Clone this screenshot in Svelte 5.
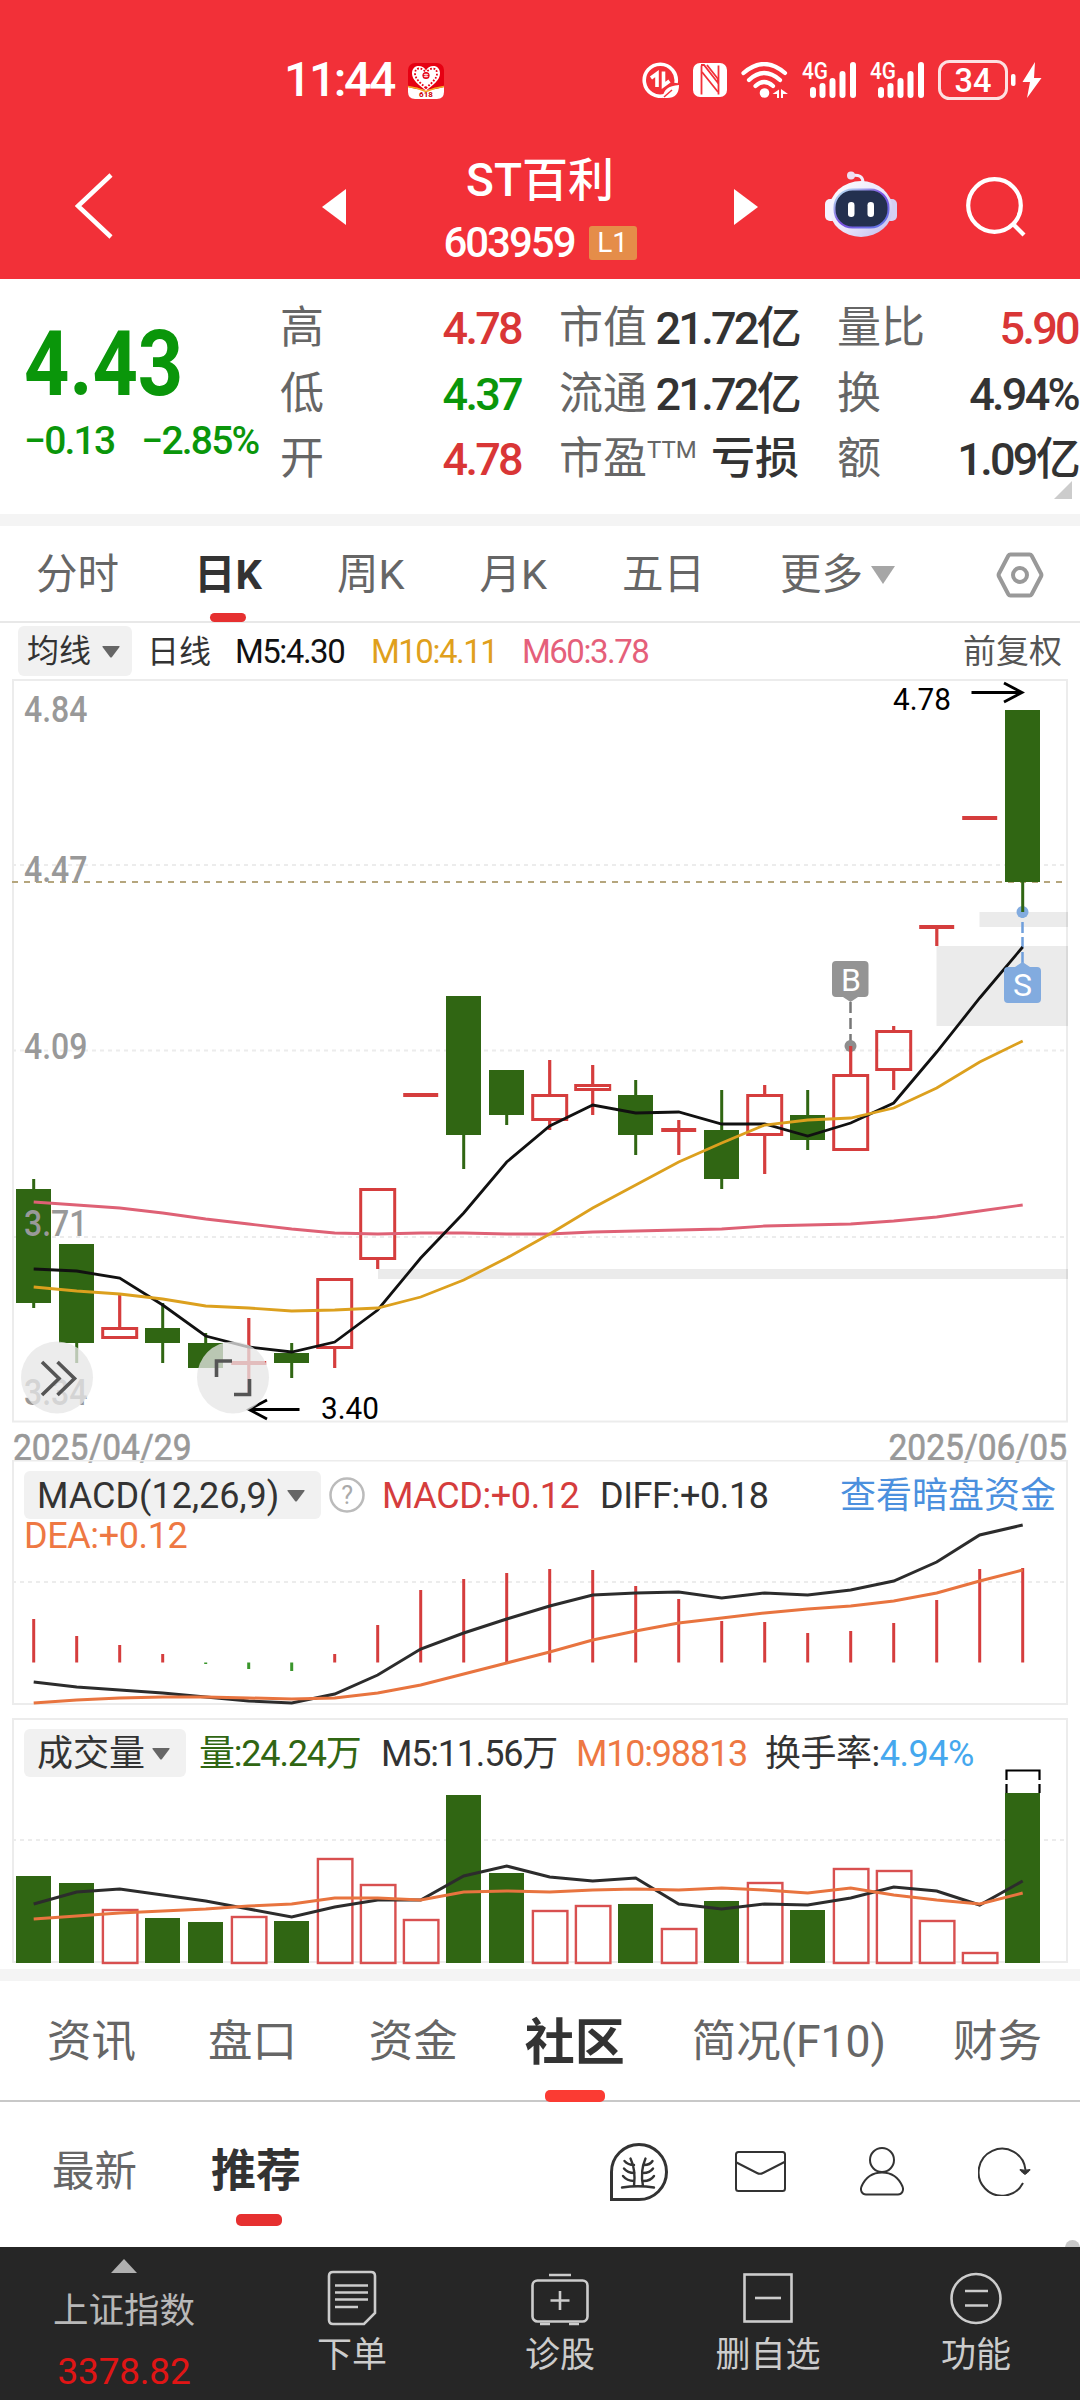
<script>
  // [type, high, bodyTop, bodyBottom, low], one entry per trading day
  const candles = [
    ['down', 1179, 1189, 1303, 1308],
    ['down', 1244, 1244, 1343, 1363],
    ['up', 1295, 1327, 1339, 1339],
    ['down', 1303, 1328, 1343, 1363],
    ['down', 1333, 1343, 1368, 1368],
    ['flat', 1318, 1361, 1365, 1393],
    ['down', 1343, 1353, 1363, 1378],
    ['up', 1278, 1278, 1349, 1368],
    ['up', 1188, 1188, 1260, 1269],
    ['flat', 1093, 1093, 1097, 1097],
    ['down', 996, 996, 1135, 1169],
    ['down', 1070, 1070, 1115, 1125],
    ['up', 1060, 1094, 1121, 1130],
    ['up', 1065, 1084, 1091, 1115],
    ['down', 1080, 1095, 1135, 1155],
    ['flat', 1120, 1128, 1132, 1155],
    ['down', 1090, 1130, 1179, 1189],
    ['up', 1085, 1094, 1136, 1174],
    ['down', 1090, 1115, 1140, 1150],
    ['up', 1046, 1074, 1151, 1151],
    ['up', 1026, 1030, 1071, 1090],
    ['flat', 925, 925, 929, 946],
    ['flat', 816, 816, 820, 820],
    ['down', 710, 710, 882, 912]
  ];

  const ma5 = [1269, 1271, 1278, 1305, 1336, 1347, 1352, 1342, 1310, 1258, 1213, 1162, 1126, 1105, 1113, 1112, 1124, 1124, 1136, 1123, 1103, 1052, 998, 947];
  const ma10 = [1287, 1291, 1294, 1299, 1306, 1308, 1311, 1310, 1308, 1297, 1280, 1258, 1234, 1208, 1185, 1162, 1143, 1125, 1120, 1118, 1108, 1088, 1062, 1041];
  const ma60 = [1202, 1205, 1208, 1213, 1219, 1224, 1229, 1233, 1234, 1233, 1233, 1234, 1234, 1232, 1231, 1230, 1229, 1226, 1225, 1224, 1221, 1217, 1211, 1205];

  const macd = [1619, 1636, 1645, 1654, 1664, 1669, 1671, 1654, 1625, 1590, 1579, 1573, 1569, 1570, 1586, 1599, 1621, 1622, 1633, 1631, 1623, 1600, 1569, 1568];
  const diff = [1682, 1687, 1690, 1693, 1697, 1701, 1703, 1694, 1675, 1649, 1633, 1619, 1606, 1595, 1593, 1592, 1598, 1593, 1595, 1590, 1581, 1562, 1535, 1525];
  const dea = [1703, 1700, 1698, 1697, 1697, 1698, 1699, 1698, 1693, 1685, 1674, 1663, 1652, 1640, 1631, 1623, 1618, 1613, 1609, 1606, 1601, 1593, 1581, 1570];

  const volume = [1876, 1883, 1909, 1918, 1922, 1916, 1921, 1858, 1884, 1919, 1795, 1873, 1910, 1905, 1904, 1928, 1901, 1882, 1910, 1868, 1870, 1920, 1952, 1793];
  const volumeDown = [0, 1, 3, 4, 6, 10, 11, 14, 16, 18, 23];
  const vol5 = [1904, 1892, 1889, 1895, 1901, 1909, 1917, 1907, 1900, 1900, 1876, 1866, 1877, 1881, 1878, 1904, 1909, 1904, 1905, 1898, 1887, 1891, 1905, 1881];
  const vol10 = [1919, 1916, 1913, 1911, 1909, 1906, 1904, 1898, 1898, 1900, 1892, 1891, 1892, 1890, 1889, 1890, 1888, 1890, 1893, 1888, 1895, 1900, 1904, 1893];

  const axis = [
    { text: '4.84', y: 722 },
    { text: '4.47', y: 882 },
    { text: '4.09', y: 1059 },
    { text: '3.71', y: 1236 },
    { text: '3.34', y: 1405 }
  ];

  let period = $state('日K');
  let section = $state('社区');
  let feed = $state('推荐');

  const periods = ['分时', '日K', '周K', '月K', '五日'];
  const sections = ['资讯', '盘口', '资金', '社区', '简况(F10)', '财务'];
  const feeds = ['最新', '推荐'];

  const x = (i) => 33.7 + i * 43;
  const line = (ys) => ys.map((y, i) => `${x(i)},${y}`).join(' ');
</script>

{#snippet caret()}
  <svg class="caret" width="18" height="12" viewBox="0 0 18 12"><path d="M1 0h16q1 0 .5 1L10 11q-1 1-2 0L.5 1Q0 0 1 0Z" fill="currentColor" /></svg>
{/snippet}

{#snippet signal()}
  <svg class="signal" width="54" height="48" viewBox="0 -6 54 48">
    <text x="0" y="17" font-size="23" font-weight="500" fill="#fff" textLength="26" lengthAdjust="spacingAndGlyphs">4G</text>
    <g stroke="#fff" stroke-width="6" stroke-linecap="round">
      <path d="M11 28v5M20.500 24v9M30.500 19v14M40.500 12v21M51 3v30" />
    </g>
  </svg>
{/snippet}

<div class="screen">
  <header>
    <div class="status">
      <span class="clock">11:44</span>
      <svg class="app" width="36" height="36" viewBox="0 0 36 36">
        <rect width="36" height="36" rx="7" fill="#e60012" />
        <path d="M0 24q18 6 36 0v5q0 7-7 7H7q-7 0-7-7Z" fill="#fff" />
        <path d="M0 23.500q9 1 18 5q9-4 18-5" fill="none" stroke="#f5a623" stroke-width="1.500" />
        <path d="M18 27.500C11 22 4 17 4 10.500c0-5 3-7.500 6.500-7.500C14 3 17 5 18 7.500 19 5 22 3 25.500 3 29 3 32 5.500 32 10.500c0 6.500-7 11.500-14 17Z" fill="#fff" />
        <path d="M18 25C11 19 7 15 7 10.500 7 7 9 5.500 11 5.500c3 0 6 2 7 5 1-3 4-5 7-5 2 0 4 1.500 4 5C29 15 25 19 18 25Z" fill="none" stroke="#e60012" stroke-width="1.800" stroke-dasharray="1.800 1.600" />
        <circle cx="18" cy="12.500" r="3.600" fill="#e60012" />
        <path d="M15.800 11.500h4.400M15.800 13.500h4.400M17.200 10.500v4M18.800 10.500v4" stroke="#fff" stroke-width=".7" />
        <text x="18" y="34.300" text-anchor="middle" font-size="8" font-weight="700" fill="#c00">618</text>
      </svg>
      <div class="system">
        <svg width="37" height="36" viewBox="0 0 37 36">
          <path d="M23 33.500A16 16 0 1 1 34 21" fill="none" stroke="#fff" stroke-width="3.600" />
          <path d="M15 25V11.500L9 16M21.500 9.500V23.500l6-4.500" fill="none" stroke="#fff" stroke-width="3.600" />
          <path d="M21 36q0-12 16-13 0 13-12 13" fill="#fff" />
          <path d="M22 35l8-7" stroke="#f23038" stroke-width="1.500" />
        </svg>
        <svg class="nfc" width="34" height="34" viewBox="0 0 34 34">
          <rect width="34" height="34" rx="7" fill="#fff" />
          <path d="M8.500 2.500v29M25.500 2.500v29" stroke="#f23038" stroke-width="1.800" />
          <path d="M8 2l3 0 14 18v-4L14 2M9 9l16 20" fill="none" stroke="#f23038" stroke-width="1.800" />
        </svg>
        <svg class="wifi" width="47" height="36" viewBox="0 0 47 36">
          <g fill="none" stroke="#fff" stroke-width="4.200" stroke-linecap="round">
            <path d="M2.500 11Q23 -7 44 11M8 18Q23 4 39 18M14.500 24Q23 16 32 24" />
          </g>
          <circle cx="23.500" cy="31" r="4.800" fill="#fff" />
          <path d="M38 27.500V36h-2v-4h-4.500ZM40 36v-9l7 5h-5v4Z" fill="#fff" />
        </svg>
        {@render signal()}
        {@render signal()}
        <svg class="battery" width="106" height="40" viewBox="0 0 106 40">
          <rect x="1.500" y="1.500" width="67" height="37" rx="10" fill="none" stroke="#fff" stroke-opacity=".85" stroke-width="3" />
          <text x="16.500" y="32" font-size="34" font-weight="500" fill="#fff" textLength="37" lengthAdjust="spacingAndGlyphs">34</text>
          <rect x="73" y="14" width="4.500" height="12" rx="2" fill="#fff" />
          <path d="M97 2 84.500 22H92l-3 16 14.500-20H96Z" fill="#fff" />
        </svg>
      </div>
    </div>
    <div class="titlebar">
      <svg class="back" width="38" height="66" viewBox="0 0 38 66"><path d="M36 2 3 33l33 31" fill="none" stroke="#fff" stroke-width="4.500" /></svg>
      <svg class="prev" width="24" height="36" viewBox="0 0 24 36"><path d="M24 0v36L0 18Z" fill="#fff" /></svg>
      <div class="stock">
        <div class="name">ST百利</div>
        <div class="code"><span>603959</span><b>L1</b></div>
      </div>
      <svg class="next" width="24" height="36" viewBox="0 0 24 36"><path d="M0 0v36l24-18Z" fill="#fff" /></svg>
      <svg class="robot" width="72" height="66" viewBox="0 0 72 66">
        <defs>
          <linearGradient id="shell" x1="0" y1="0" x2="1" y2="1">
            <stop offset="0" stop-color="#ffffff" />
            <stop offset=".55" stop-color="#e9e6fb" />
            <stop offset="1" stop-color="#bdb9ec" />
          </linearGradient>
          <linearGradient id="rim" x1="0" y1="0" x2="1" y2="1">
            <stop offset="0" stop-color="#bff3f5" />
            <stop offset=".5" stop-color="#7b4fe0" />
            <stop offset="1" stop-color="#5f7fe8" />
          </linearGradient>
        </defs>
        <path d="M26 4.500q12-2 12 7" fill="none" stroke="#f4ecfb" stroke-width="3" />
        <circle cx="26" cy="4.500" r="4" fill="#eedff2" />
        <rect x="0" y="28" width="12" height="22" rx="5" fill="#f5f2ff" />
        <rect x="60" y="28" width="12" height="22" rx="5" fill="#d5d0f4" />
        <ellipse cx="36" cy="38" rx="31.500" ry="28" fill="url(#shell)" />
        <rect x="9.500" y="18.500" width="54" height="38" rx="18" fill="#23304f" stroke="url(#rim)" stroke-width="2" />
        <rect x="23" y="31" width="6.500" height="15" rx="3.200" fill="#fff" />
        <rect x="42.500" y="31" width="6.500" height="15" rx="3.200" fill="#fff" />
      </svg>
      <svg class="search" width="60" height="60" viewBox="0 0 60 60">
        <g fill="none" stroke="#fff" stroke-width="4.200"><circle cx="28.500" cy="28.500" r="26.300" /><path d="M47 47l11 11" /></g>
      </svg>
    </div>
  </header>

  <section class="quote">
    <div class="last">
      <div class="price">4.43</div>
      <div class="change"><span>−0.13</span><span>−2.85%</span></div>
    </div>
    <dl class="pairs first">
      <div><dt>高</dt><dd class="red">4.78</dd></div>
      <div><dt>低</dt><dd class="green">4.37</dd></div>
      <div><dt>开</dt><dd class="red">4.78</dd></div>
    </dl>
    <dl class="pairs second">
      <div><dt>市值</dt><dd>21.72亿</dd></div>
      <div><dt>流通</dt><dd>21.72亿</dd></div>
      <div><dt>市盈<sup>TTM</sup></dt><dd class="cjk">亏损</dd></div>
    </dl>
    <dl class="pairs third">
      <div><dt>量比</dt><dd class="red">5.90</dd></div>
      <div><dt>换</dt><dd>4.94%</dd></div>
      <div><dt>额</dt><dd>1.09亿</dd></div>
    </dl>
    <svg class="corner" width="18" height="18" viewBox="0 0 18 18"><path d="M18 0v18H0Z" fill="#ccc" /></svg>
  </section>

  <nav class="periods">
    {#each periods as p}
      <button class:active={p === period} onclick={() => (period = p)}>{p}</button>
    {/each}
    <button class="more">更多<svg width="24" height="18" viewBox="0 0 24 18"><path d="M0 0h24L12 18Z" fill="#a6a6a6" /></svg></button>
    <svg class="gear" width="48" height="46" viewBox="0 0 48 46">
      <g fill="none" stroke="#999" stroke-width="4"><path d="M14.500 2.500h19q1.500 0 2.200 1.200L45 21.500q.8 1.500 0 3l-9.300 17.800q-.7 1.200-2.200 1.200h-19q-1.500 0-2.200-1.200L3 24.500q-.8-1.500 0-3l9.300-17.800q.7-1.200 2.200-1.200Z" /><circle cx="24" cy="23" r="7" /></g>
    </svg>
  </nav>

  <div class="averages">
    <button class="pick">均线{@render caret()}</button>
    <span class="daily">日线</span>
    <span class="m5">M5:4.30</span>
    <span class="m10">M10:4.11</span>
    <span class="m60">M60:3.78</span>
    <span class="adjust">前复权</span>
  </div>

  <svg class="kline" width="1080" height="793" viewBox="0 679 1080 793">
    <g fill="none" stroke="#ececec" stroke-width="2">
      <rect x="13" y="680" width="1054" height="741.500" />
      <path d="M12 865H1067M12 1050.500H1067M12 1237H1067" stroke-dasharray="4 4" />
    </g>
    <g fill="#000" fill-opacity=".08">
      <rect x="979.500" y="912" width="88.500" height="15" />
      <rect x="936.500" y="946" width="131.500" height="80" />
      <rect x="378" y="1269" width="690" height="10" />
    </g>
    <path d="M12 882H1063" stroke="#b5a67d" stroke-width="2" stroke-dasharray="6 6" />

    <path d="M850.500 1002v42" stroke="#777" stroke-width="2.500" stroke-dasharray="11 5" />
    <circle cx="850.500" cy="1046" r="6" fill="#8d8d8d" />
    <path d="M1022.500 912v52" stroke="#6f9fdc" stroke-width="2.500" stroke-dasharray="11 4" stroke-dashoffset="5" />
    <circle cx="1022.500" cy="912" r="6" fill="#82abdf" />

    {#each candles as [type, high, top, bottom, low], i}
      {#if type === 'down'}
        <rect x={x(i) - 1.5} y={high} width="3" height={low - high} fill="#306613" />
        <rect x={x(i) - 17.7} y={top} width="35" height={bottom - top} fill="#306613" />
      {:else if type === 'up'}
        <path d="M{x(i)} {high}V{top}M{x(i)} {bottom}V{low}" stroke="#d53d3d" stroke-width="3.2" />
        <rect x={x(i) - 17} y={top + 1.5} width="34" height={bottom - top - 3} fill="none" stroke="#d53d3d" stroke-width="3" />
      {:else}
        <rect x={x(i) - 1.5} y={high} width="3.2" height={low - high} fill="#d53d3d" />
        <rect x={x(i) - 17.5} y={top} width="35" height={bottom - top} fill="#d53d3d" />
      {/if}
    {/each}

    <g font-size="36" fill="#999">
      {#each axis as label}
        <text x="24" y={label.y} font-weight="500" textLength="63.500" lengthAdjust="spacingAndGlyphs">{label.text}</text>
      {/each}
      <text x="13" y="1459.500" textLength="178.500" lengthAdjust="spacingAndGlyphs" stroke="#999" stroke-width=".6">2025/04/29</text>
      <text x="888.500" y="1459.500" textLength="178.500" lengthAdjust="spacingAndGlyphs" stroke="#999" stroke-width=".6">2025/06/05</text>
    </g>

    <g fill="none" stroke-width="2.800">
      <polyline points={line(ma60)} stroke="#de6175" />
      <polyline points={line(ma5)} stroke="#111" />
      <polyline points={line(ma10)} stroke="#dca01e" />
    </g>

    <path d="M836 961h28.500q4 0 4 4v28q0 4-4 4H858l-7.500 5-7.500-5h-7q-4 0-4-4v-28q0-4 4-4Z" fill="#949494" />
    <text x="851" y="990.500" text-anchor="middle" font-size="32" fill="#fff">B</text>
    <path d="M1008 967h7l7.500-5 7.500 5h7q4 0 4 4v28q0 4-4 4h-29q-4 0-4-4v-28q0-4 4-4Z" fill="#82abdf" />
    <text x="1022.500" y="996" text-anchor="middle" font-size="32" fill="#fff">S</text>

    <g font-size="31" fill="#000">
      <text x="893" y="710" textLength="58" lengthAdjust="spacingAndGlyphs">4.78</text>
      <text x="321" y="1419" textLength="58" lengthAdjust="spacingAndGlyphs">3.40</text>
    </g>
    <path d="M971.500 692.500H1022M1004 683l18 9.500-18 9.500M299.500 1409.500H249M267 1400l-18 9.500 18 9.500" fill="none" stroke="#000" stroke-width="2.800" />

    <g fill="#e6e6e6" fill-opacity=".76">
      <circle cx="57" cy="1377.500" r="36" />
      <circle cx="233" cy="1377.500" r="36" />
    </g>
    <g fill="none" stroke="#555" stroke-width="3.600">
      <path d="M42 1362l17 16.500L42 1395M57.500 1362l17 16.500-17 16.500" />
      <path d="M216.500 1377v-16H232M249.500 1379v15.500H234" />
    </g>
  </svg>

  <section class="panel macd">
    <svg width="1080" height="258" viewBox="0 1460 1080 258">
      <g fill="none" stroke="#ececec" stroke-width="2">
        <rect x="13" y="1460.500" width="1054" height="243.500" />
        <path d="M12 1582H1067" stroke-dasharray="4 4" />
      </g>
      {#each macd as y, i}
        <path d="M{x(i)} {y}V1662.500" stroke={y > 1662 ? '#3a962c' : '#d53d3d'} stroke-width="3" />
      {/each}
      <polyline points={line(diff)} fill="none" stroke="#2c2c2c" stroke-width="3" />
      <polyline points={line(dea)} fill="none" stroke="#e8743f" stroke-width="3" />
    </svg>
    <div class="legend">
      <div class="row">
        <button class="pick">MACD(12,26,9){@render caret()}</button>
        <svg class="help" width="36" height="36" viewBox="0 0 36 36">
          <circle cx="18" cy="18" r="16.500" fill="none" stroke="#bbb" stroke-width="2.500" />
          <text x="18" y="26.500" text-anchor="middle" font-size="25" fill="#aaa">?</text>
        </svg>
        <span class="bar">MACD:+0.12</span>
        <span class="diff">DIFF:+0.18</span>
        <a class="dark" href="#funds">查看暗盘资金</a>
      </div>
      <div class="dea">DEA:+0.12</div>
    </div>
  </section>

  <section class="panel volume">
    <svg width="1080" height="251" viewBox="0 1718 1080 251">
      <g fill="none" stroke="#ececec" stroke-width="2">
        <rect x="13" y="1719" width="1054" height="243" />
        <path d="M12 1840H1067" stroke-dasharray="4 4" />
      </g>
      {#each volume as y, i}
        {#if volumeDown.includes(i)}
          <rect x={x(i) - 17.7} {y} width="35" height={1963 - y} fill="#306613" />
        {:else}
          <rect x={x(i) - 16.8} y={y + 1} width="34.5" height={1962 - y} fill="none" stroke="#d85050" stroke-width="2.400" />
        {/if}
      {/each}
      <path d="M1006.500 1780v-9.500h33v9.500M1006.500 1784v9M1039.500 1784v9" fill="none" stroke="#000" stroke-width="2.200" />
      <polyline points={line(vol5)} fill="none" stroke="#2c2c2c" stroke-width="3" />
      <polyline points={line(vol10)} fill="none" stroke="#e8743f" stroke-width="3" />
    </svg>
    <div class="legend">
      <div class="row">
        <button class="pick">成交量{@render caret()}</button>
        <span class="total">量:24.24万</span>
        <span class="v5">M5:11.56万</span>
        <span class="v10">M10:98813</span>
        <span class="rate">换手率:<em>4.94%</em></span>
      </div>
    </div>
  </section>

  <nav class="sections">
    {#each sections as s}
      <button class:active={s === section} onclick={() => (section = s)}>{s}</button>
    {/each}
  </nav>

  <div class="feeds">
    {#each feeds as f}
      <button class:active={f === feed} onclick={() => (feed = f)}>{f}</button>
    {/each}
    <div class="tools">
      <svg width="58" height="58" viewBox="0 0 58 58">
        <g fill="none" stroke="#333" stroke-linecap="round">
          <path d="M1.500 56.500V29A27.500 27.500 0 1 1 29 56.500Z" stroke-width="3" stroke-linecap="butt" />
          <path d="M12 44.500q16-2.500 32 0M24 43q2-16-3.500-27.500M33 43q-3-15 2.500-27.500M24 22q-6 0-9.500-4M24.500 30q-7 0-10.500-4.500M24 38q-7 0-11-5M34 22q6 0 8.500-4M33 30q7 0 10-4.500M33.500 38q7 0 10.500-5" stroke-width="2.400" />
        </g>
      </svg>
      <svg class="mail" width="51" height="41" viewBox="0 0 51 41">
        <g fill="none" stroke="#333" stroke-width="2"><rect x="1" y="1" width="49" height="39" rx="2.500" /><path d="M1.500 11.500 22 22q3 1.500 6 0l21.500-11" /></g>
      </svg>
      <svg width="44" height="49" viewBox="0 0 44 49">
        <g fill="none" stroke="#333" stroke-width="2"><circle cx="22" cy="13" r="12" /><path d="M22 25.500c10 0 17 6 20.500 14 1.500 4-.5 8-4.500 8H6c-4 0-6-4-4.500-8C5 31.500 12 25.500 22 25.500Z" /></g>
      </svg>
      <svg width="53" height="49" viewBox="0 0 53 49">
        <path d="M45 36A23.500 23.500 0 1 1 47.500 23" fill="none" stroke="#333" stroke-width="2" />
        <path d="M42 22.500q5 1.500 10 0 .5 1-5 5-5.500-4-5-5Z" fill="#333" stroke="#333" />
      </svg>
    </div>
    <i class="knob"></i>
  </div>

  <footer>
    <div class="index">
      <svg width="26" height="14" viewBox="0 0 26 14"><path d="M13 0l13 14H0Z" fill="#b0b0b0" /></svg>
      <span>上证指数</span>
      <strong>3378.82</strong>
    </div>
    <button>
      <svg width="56" height="56" viewBox="0 0 56 56">
        <g fill="none" stroke="#ccc" stroke-width="2.600"><path d="M9 2h38q4 0 4 4v37L40 54H9q-4 0-4-4V6q0-4 4-4ZM11 15.500h33M11 22.500h33M11 29.500h33M11 37h23" /></g>
      </svg>
      下单
    </button>
    <button>
      <svg width="58" height="56" viewBox="0 0 58 56">
        <g fill="none" stroke="#ccc" stroke-width="2.600"><rect x="1.500" y="10.500" width="55" height="41" rx="5" /><path d="M18 5h22M29 21v19M19.500 30.500h19M9 54h10M38 54h10" /></g>
      </svg>
      诊股
    </button>
    <button>
      <svg width="56" height="56" viewBox="0 0 56 56">
        <g fill="none" stroke="#ccc" stroke-width="2.600"><rect x="4.500" y="4.500" width="47" height="47" /><path d="M15 28h26" /></g>
      </svg>
      删自选
    </button>
    <button>
      <svg width="56" height="56" viewBox="0 0 56 56">
        <g fill="none" stroke="#ccc" stroke-width="2.600"><circle cx="28" cy="28.500" r="24.500" /><path d="M17 21h23M17 35.500h23" /></g>
      </svg>
      功能
    </button>
  </footer>
</div>

<style>
  :global(body) {
    margin: 0;
    background: #fff;
  }

  .screen {
    width: 1080px;
    height: 2400px;
    display: flex;
    flex-direction: column;
    overflow: hidden;
    background: #fff;
    color: #333;
    font-family: Roboto, 'Noto Sans CJK SC', sans-serif;
    line-height: 1.2;
  }

  svg {
    display: block;
    flex: none;
  }

  button {
    border: 0;
    padding: 0;
    background: none;
    color: inherit;
    font: inherit;
    white-space: nowrap;
  }

  header {
    flex: none;
    height: 279px;
    background: #f23038;
    color: #fff;
  }

  .status {
    display: flex;
    align-items: center;
    height: 160px;
    padding: 0 36px 0 284px;
    box-sizing: border-box;
  }

  .clock {
    width: 124px;
    font-size: 48px;
    font-weight: 500;
    letter-spacing: -2.4px;
  }

  .app {
    margin-top: 2px;
  }

  .system {
    display: flex;
    align-items: center;
    margin-left: auto;
  }

  .nfc,
  .wifi,
  .signal,
  .battery {
    margin-left: 14px;
  }

  .titlebar {
    display: flex;
    align-items: center;
    height: 92px;
    padding-left: 75px;
  }

  .prev {
    margin: 1px 0 0 209px;
  }

  .stock {
    width: 388px;
    padding-top: 13px;
    text-align: center;
  }

  .name {
    font-size: 46px;
    line-height: 60px;
    font-weight: 500;
  }

  .code {
    display: flex;
    justify-content: center;
    align-items: center;
    gap: 14px;
    font-size: 42px;
    line-height: 66px;
    font-weight: 500;
    letter-spacing: -2px;
  }

  .code b {
    width: 48px;
    height: 34px;
    border-radius: 3px;
    background: #e58d49;
    font-size: 28px;
    line-height: 34px;
    font-weight: 400;
    letter-spacing: 0;
  }

  .next {
    margin-top: 1px;
  }

  .robot {
    margin: -4px 0 0 67px;
  }

  .search {
    margin: 1px 0 0 69px;
  }

  .quote {
    position: relative;
    flex: none;
    display: flex;
    height: 235px;
    border-bottom: 12px solid #f4f4f4;
  }

  .last {
    width: 280px;
    padding-left: 24px;
    box-sizing: border-box;
    color: #0a960a;
  }

  .price {
    margin-top: 41px;
    font-size: 90px;
    line-height: 90px;
    font-weight: 700;
    transform: scaleX(0.88);
    transform-origin: 0 50%;
  }

  .change {
    display: flex;
    gap: 27px;
    margin-top: 8px;
    font-size: 39px;
    line-height: 46px;
    font-weight: 500;
    letter-spacing: -1.8px;
    white-space: nowrap;
  }

  .pairs {
    margin: 17px 0 0;
  }

  .pairs div {
    display: flex;
    justify-content: space-between;
    align-items: center;
    height: 65.5px;
    line-height: 65px;
  }

  .first {
    width: 241px;
  }

  .second {
    width: 240px;
    margin-left: 38px;
  }

  .third {
    width: 242px;
    margin-left: 38px;
  }

  dt {
    font-size: 44px;
    color: #666;
    white-space: nowrap;
  }

  sup {
    font-size: 24px;
    line-height: 0;
    vertical-align: 16px;
  }

  dd {
    margin: 0;
    font-size: 45px;
    font-weight: 500;
    letter-spacing: -2.7px;
    white-space: nowrap;
  }

  .third dd {
    margin-right: 1px;
  }

  dd.cjk {
    font-size: 44px;
    letter-spacing: 0;
  }

  .red {
    color: #d93636;
  }

  .green {
    color: #0a960a;
  }

  .corner {
    position: absolute;
    right: 8px;
    bottom: 15px;
  }

  .periods {
    flex: none;
    display: flex;
    align-items: center;
    gap: 75px;
    height: 92px;
    padding: 3px 0 0 36px;
    border-bottom: 2px solid #e8e8e8;
    margin-bottom: -1px;
    font-size: 41.5px;
    color: #666;
  }

  .active {
    position: relative;
    color: #333;
    font-weight: 700;
  }

  .active::after {
    content: '';
    position: absolute;
    left: 50%;
    transform: translateX(-50%);
    border-radius: 5px;
    background: #e63030;
  }

  .periods .active::after {
    bottom: -22px;
    width: 36px;
    height: 9px;
  }

  .more {
    display: flex;
    align-items: center;
    gap: 8px;
  }

  .gear {
    margin-left: 26px;
  }

  .averages {
    flex: none;
    display: flex;
    align-items: center;
    height: 57px;
    padding: 0 18px;
    font-size: 33px;
    letter-spacing: -1.5px;
    white-space: nowrap;
  }

  .pick {
    display: flex;
    align-items: center;
    justify-content: space-between;
    box-sizing: border-box;
    border-radius: 6px;
    background: #f1f1f1;
    letter-spacing: 0;
  }

  .averages .pick {
    width: 114px;
    height: 50px;
    padding: 2px 12px 0 9px;
    font-size: 32px;
  }

  .averages > span {
    padding-top: 3px;
  }

  .caret {
    color: #666;
  }

  .daily {
    width: 88px;
    margin-left: 15px;
    font-size: 32px;
    letter-spacing: 0;
  }

  .m5 {
    width: 136px;
    color: #111;
  }

  .m10 {
    width: 151px;
    color: #e0a01c;
  }

  .m60 {
    color: #e5607a;
  }

  .adjust {
    margin-left: auto;
    letter-spacing: 0;
    color: #555;
  }

  /* the date labels hang slightly over the next panel's border */
  .kline {
    margin-bottom: -12px;
  }

  .panel {
    flex: none;
    display: grid;
  }

  .panel > * {
    grid-area: 1 / 1;
  }

  .legend {
    padding: 11px 24px 0;
    font-size: 36px;
    letter-spacing: -0.4px;
    white-space: nowrap;
  }

  .row {
    display: flex;
    align-items: center;
    height: 48px;
    line-height: 48px;
  }

  .row > span,
  .row > a {
    padding-top: 2px;
  }

  .row .pick {
    height: 48px;
    padding: 1px 16px 0 13px;
  }

  .macd .pick {
    width: 297px;
  }

  .help {
    margin-left: 8px;
  }

  .bar {
    width: 218px;
    margin-left: 17px;
    color: #d53d3d;
  }

  .dark {
    margin-left: auto;
    letter-spacing: 0;
    color: #4b90de;
    text-decoration: none;
  }

  .dea {
    line-height: 34px;
    color: #ee7843;
  }

  .volume .legend {
    letter-spacing: -1.2px;
  }

  .volume .pick {
    width: 162px;
  }

  .total {
    width: 182px;
    margin-left: 13px;
    color: #306613;
  }

  .v5 {
    width: 195px;
  }

  .v10 {
    width: 189px;
    color: #ee7843;
  }

  .rate {
    letter-spacing: -0.5px;
  }

  em {
    font-style: normal;
    color: #45a8ee;
  }

  .sections {
    flex: none;
    display: flex;
    align-items: center;
    height: 115px;
    padding: 4px 38px 0 47px;
    justify-content: space-between;
    border-top: 12px solid #f4f4f4;
    border-bottom: 2px solid #c8c8c8;
    font-size: 44.5px;
    color: #666;
  }

  .sections button:nth-child(-n + 2) {
    margin-right: 5px;
  }

  .sections .active {
    font-size: 50px;
  }

  .sections .active::after {
    bottom: -29px;
    width: 60px;
    height: 12px;
    background: #fb3b33;
  }

  .feeds {
    position: relative;
    flex: none;
    display: flex;
    align-items: center;
    box-sizing: border-box;
    height: 145px;
    padding: 0 49px 6px 52px;
    overflow: hidden;
    font-size: 42.5px;
    color: #666;
  }

  .feeds .active {
    margin-left: 74px;
    font-size: 45px;
  }

  .feeds .active::after {
    left: calc(50% + 3px);
    bottom: -27px;
    width: 46px;
    height: 12px;
  }

  .tools {
    display: flex;
    align-items: center;
    gap: 74px;
    margin-left: auto;
  }

  .mail {
    margin-left: -7px;
  }

  .knob {
    position: absolute;
    right: 0;
    bottom: -8px;
    width: 15px;
    height: 15px;
    border-radius: 50%;
    background: #c8c8c8;
  }

  footer {
    flex: 1;
    display: flex;
    background: #262626;
    color: #ccc;
    font-size: 35px;
  }

  footer button {
    display: flex;
    flex-direction: column;
    align-items: center;
    gap: 4px;
    width: 208px;
    padding-top: 23px;
    line-height: 52px;
  }

  .index {
    display: flex;
    flex-direction: column;
    align-items: center;
    width: 248px;
    padding-top: 12px;
    line-height: 52px;
    color: #b8b8b8;
  }

  .index span {
    margin-top: 12px;
    font-size: 35.5px;
  }

  .index strong {
    margin-top: 9px;
    font-size: 37px;
    font-weight: 400;
    letter-spacing: -0.2px;
    color: #e01515;
  }
</style>
